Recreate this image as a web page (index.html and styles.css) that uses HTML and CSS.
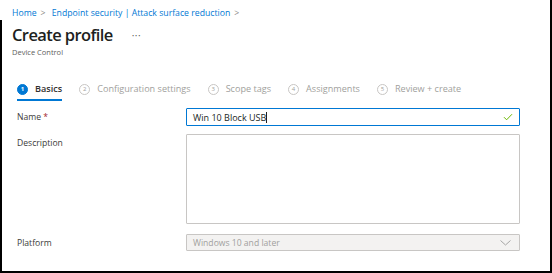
FILE: index.html
```html
<!DOCTYPE html>
<html lang="en">
<head>
    <meta charset="UTF-8">
    <title>Create profile</title>
    <link rel="stylesheet" href="styles.css">
</head>
<body>
    <div class="frame">
        <nav class="crumbs">
            <a href="#">Home</a><span class="sep">&gt;</span>
            <a href="#">Endpoint security | Attack surface reduction</a><span class="sep">&gt;</span>
        </nav>
        <div class="title-row">
            <h1>Create profile</h1>
            <span class="more">&middot;&middot;&middot;</span>
        </div>
        <div class="subtitle">Device Control</div>

        <ul class="steps">
            <li class="step active"><span class="num">1</span>Basics</li>
            <li class="step"><span class="num">2</span>Configuration settings</li>
            <li class="step"><span class="num">3</span>Scope tags</li>
            <li class="step"><span class="num">4</span>Assignments</li>
            <li class="step"><span class="num">5</span>Review + create</li>
        </ul>

        <div class="form">
            <div class="row name-row">
                <label class="label">Name <span class="req">*</span></label>
                <div class="input focused">
                    <span class="value">Win 10 Block USB</span><span class="caret"></span>
                    <svg class="check" width="10" height="8" viewBox="0 0 10 8"><path d="M1 4.2 L3.6 6.8 L9 1.2" fill="none" stroke="#6bb700" stroke-width="1"/></svg>
                </div>
            </div>
            <div class="row">
                <label class="label">Description</label>
                <div class="textarea"></div>
            </div>
            <div class="row">
                <label class="label">Platform</label>
                <div class="select">
                    <span>Windows 10 and later</span>
                    <svg class="chev" width="11" height="6" viewBox="0 0 11 6"><path d="M0.5 0.5 L5.5 5 L10.5 0.5" fill="none" stroke="#a6a6a6" stroke-width="1"/></svg>
                </div>
            </div>
        </div>
    </div>
</body>
</html>
```

FILE: styles.css
```css
html, body {
    margin: 0;
    padding: 0;
    background: #fff;
}
body {
    font-family: 'Open Sans', 'Noto Sans', sans-serif;
    color: #323130;
}
.frame {
    position: relative;
    width: 552px;
    height: 273px;
    box-sizing: border-box;
    border-left: 2px solid #000;
    border-right: 2px solid #000;
    border-bottom: 2px solid #000;
    padding: 6px 0 0 10px;
}
/* left edge is cut off near the top */
.frame::before {
    content: "";
    position: absolute;
    left: -2px;
    top: 0;
    width: 2px;
    height: 20px;
    background: #fff;
}
.crumbs {
    font-size: 8.7px;
    line-height: 14px;
    color: #0078d4;
}
.crumbs a {
    color: #0078d4;
    text-decoration: none;
}
.sep {
    color: #8a8886;
    margin: 0 4px;
}
.title-row {
    display: flex;
    align-items: center;
    margin-top: 4px;
}
h1 {
    font-size: 16.5px;
    font-weight: 600;
    margin: 0;
    line-height: 21px;
    letter-spacing: -0.6px;
    color: #201f1e;
}
.more {
    margin-left: 19px;
    font-size: 10px;
    line-height: 14px;
    color: #605e5c;
    letter-spacing: 0.5px;
}
.subtitle {
    font-size: 7.5px;
    line-height: 11px;
    color: #605e5c;
    margin-top: 2px;
}
.steps {
    list-style: none;
    margin: 24px 0 0 5px;
    padding: 0;
    display: flex;
    gap: 17px;
}
.step {
    display: flex;
    align-items: center;
    font-size: 9.1px;
    line-height: 14px;
    color: #a19f9d;
    padding-bottom: 5px;
}
.num {
    width: 9px;
    height: 9px;
    border: 1px solid #c8c6c4;
    border-radius: 50%;
    font-size: 6px;
    line-height: 9px;
    text-align: center;
    margin-right: 7px;
    color: #a19f9d;
}
.step.active {
    color: #323130;
    font-weight: 600;
    border-bottom: 2px solid #0078d4;
    padding-bottom: 3px;
}
.step.active .num {
    background: #0078d4;
    border-color: #0078d4;
    color: #fff;
    font-weight: 700;
}
.form {
    margin-top: 7px;
    padding-left: 5px;
}
.row {
    display: flex;
    align-items: flex-start;
    margin-bottom: 10px;
}
.name-row {
    margin-bottom: 8px;
}
.label {
    width: 169px;
    font-size: 8.6px;
    line-height: 14px;
    color: #3b3a39;
    padding-top: 2px;
}
.req {
    color: #a4262c;
}
.input, .textarea, .select {
    width: 334px;
    box-sizing: border-box;
    border: 1px solid #c8c6c4;
    border-radius: 1px;
    background: #fff;
}
.input {
    height: 18px;
    display: flex;
    align-items: center;
    padding: 0 6px;
    font-size: 9px;
    color: #201f1e;
}
.input.focused {
    border: 1px solid #0078d4;
}
.caret {
    width: 1px;
    height: 11px;
    background: #201f1e;
}
.check {
    margin-left: auto;
}
.textarea {
    height: 90px;
}
.select {
    height: 17px;
    display: flex;
    align-items: center;
    justify-content: space-between;
    padding: 0 8px 0 6px;
    background: #f3f2f1;
    font-size: 8.6px;
    color: #a19f9d;
}
```
